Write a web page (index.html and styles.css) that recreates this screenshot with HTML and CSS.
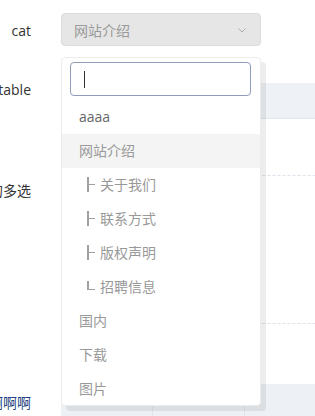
FILE: index.html
```html
<!DOCTYPE html>
<html lang="zh-CN">
<head>
    <meta charset="UTF-8">
    <meta name="viewport" content="width=device-width, initial-scale=1.0">
    <title>编辑</title>
    <link rel="stylesheet" href="styles.css">
</head>
<body>
    <div class="form">
        <div class="row row-cat">
            <label class="label"><span>cat</span></label>
            <div class="field">
                <div class="select">
                    <span class="select-text">网站介绍</span>
                    <svg class="arrow" width="8" height="5" viewBox="0 0 8 5"><polyline points="0.5,0.5 4,4 7.5,0.5" fill="none" stroke="#aaa" stroke-width="1"/></svg>
                </div>
            </div>

            <div class="dropdown">
                <div class="search"><div class="search-input"><span class="caret"></span></div></div>
                <ul class="options">
                    <li class="option dark">aaaa</li>
                    <li class="option hover">网站介绍</li>
                    <li class="option child"><span class="tree"></span>关于我们</li>
                    <li class="option child"><span class="tree"></span>联系方式</li>
                    <li class="option child"><span class="tree"></span>版权声明</li>
                    <li class="option child"><span class="tree last"></span>招聘信息</li>
                    <li class="option">国内</li>
                    <li class="option">下载</li>
                    <li class="option">图片</li>
                </ul>
            </div>
        </div>

        <div class="row row-table">
            <label class="label"><span>可编辑table</span></label>
            <div class="field">
                <div class="table-head"></div>
                <div class="table-row"></div>
            </div>
        </div>

        <div class="row row-multi">
            <label class="label"><span>可以拖动的多选</span></label>
            <div class="field">
                <div class="dash-block"></div>
            </div>
        </div>

        <div class="row row-last">
            <label class="label link"><span>啊啊啊啊啊</span></label>
            <div class="field">
                <div class="spacer"></div>
                <div class="bottom-bar"><span class="cell"></span><span class="cell"></span></div>
            </div>
        </div>
    </div>
</body>
</html>
```

FILE: styles.css
```css
body {
    margin: 0;
    padding: 0;
    font-family: "Open Sans", "Noto Sans CJK SC", sans-serif;
    font-size: 14px;
    color: #333;
    background: #fff;
    overflow: hidden;
}

.form {
    position: relative;
    width: 315px;
    height: 416px;
    overflow: hidden;
}

.row {
    display: flex;
}

.label {
    flex: 0 0 31px;
    min-width: 0;
    margin-right: 30px;
    display: flex;
    justify-content: flex-end;
    white-space: nowrap;
    line-height: 14px;
}
.label span {
    flex: 0 0 auto;
}

.field {
    flex: 1 0 auto;
    width: 300px;
}

/* cat select */
.row-cat {
    padding-top: 13px;
}
.row-cat .label {
    line-height: 33px;
    padding-top: 1px;
}
.select {
    box-sizing: border-box;
    width: 200px;
    height: 33px;
    background: #e6e6e6;
    border: 1px solid #dcdcdc;
    border-radius: 4px;
    display: flex;
    align-items: center;
    justify-content: space-between;
    padding: 0 14px 0 12px;
}
.select-text {
    color: #9a9a9a;
}
.arrow {
    margin-top: 1px;
}

/* dropdown */
.dropdown {
    position: absolute;
    left: 61px;
    top: 57px;
    width: 200px;
    height: 349px;
    box-sizing: border-box;
    background: #fff;
    border: 1px solid #ececec;
    border-radius: 4px;
    box-shadow: 5px 5px 0 rgba(0, 0, 0, 0.07);
    z-index: 10;
    overflow: hidden;
}
.search {
    padding: 4px 9px 4px 8px;
}
.search-input {
    box-sizing: border-box;
    height: 34px;
    border: 1px solid #8e9bba;
    border-radius: 4px;
    padding: 0 13px;
    display: flex;
    align-items: center;
}
.caret {
    width: 1px;
    height: 17px;
    background: #333;
}
.options {
    list-style: none;
    margin: 0;
    padding: 0;
}
.option {
    height: 34px;
    line-height: 34px;
    padding-left: 17px;
    color: #999;
    white-space: nowrap;
}
.option.dark {
    color: #666;
}
.option.hover {
    background: #f4f4f4;
}
.option.child {
    padding-left: 25px;
}
.tree {
    display: inline-block;
    position: relative;
    width: 6px;
    height: 15px;
    margin-right: 5px;
    vertical-align: -2px;
    border-left: 2px solid #a0a0a0;
}
.tree::after {
    content: "";
    position: absolute;
    left: 0;
    top: 7px;
    width: 6px;
    border-top: 1px solid #a0a0a0;
}
.tree.last {
    height: 9px;
    vertical-align: 2px;
}
.tree.last::after {
    top: auto;
    bottom: 0;
}

/* table */
.row-table {
    margin-top: 36px;
}
.table-head {
    height: 35px;
    background: #eef1f5;
    border-bottom: 1px solid #e1e5ea;
}
.table-row {
    height: 56px;
    border-bottom: 1px dashed #dde3ea;
}

/* multi */
.row-multi .label {
    padding-top: 8px;
}
.dash-block {
    height: 147px;
    border-bottom: 1px dashed #dde3ea;
}

/* last row */
.row-last .label {
    padding-top: 72px;
}
.link {
    color: #21407e;
}
.spacer {
    height: 60px;
}
.bottom-bar {
    height: 32px;
    background: #edf0f4;
    display: flex;
}
.bottom-bar .cell {
    width: 91px;
    border-right: 1px solid #e1e5ea;
}
```
